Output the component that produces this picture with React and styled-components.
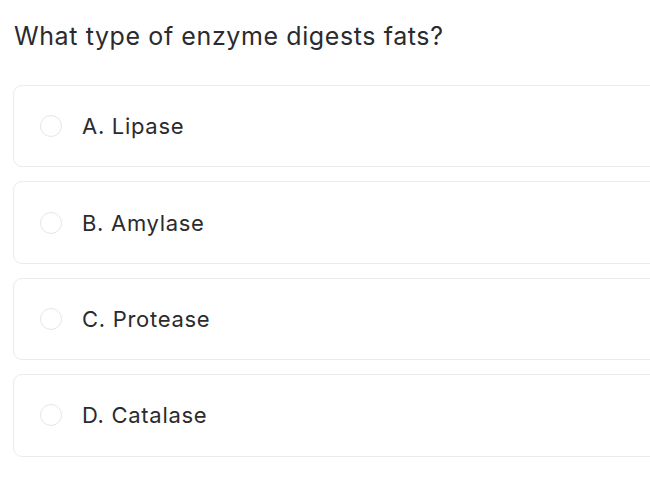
import React from "react";
import styled, { createGlobalStyle } from "styled-components";

const options = ["A. Lipase", "B. Amylase", "C. Protease", "D. Catalase"];

export default function App() {
  return (
    <>
      <GlobalStyle />
      <Page>
        <Question>What type of enzyme digests fats?</Question>
        <OptionList>
          {options.map((label) => (
            <Option key={label}>
              <Radio />
              <Label>{label}</Label>
            </Option>
          ))}
        </OptionList>
      </Page>
    </>
  );
}

const GlobalStyle = createGlobalStyle`
  html, body {
    margin: 0;
    background: #ffffff;
    overflow: hidden;
  }
  body {
    font-family: Inter, Lato, sans-serif;
    color: #2b2b2e;
  }
`;

const Page = styled.div`
  padding: 0 0 0 13px;
  width: 680px;
`;

const Question = styled.h1`
  margin: 0;
  padding-top: 21px;
  height: 85px;
  box-sizing: border-box;
  font-size: 25px;
  font-weight: 400;
  letter-spacing: 0.6px;
  line-height: 30px;
  padding-left: 1px;
`;

const OptionList = styled.div`
  display: flex;
  flex-direction: column;
  gap: 14px;
`;

const Option = styled.label`
  display: flex;
  align-items: center;
  gap: 20px;
  height: 82.4px;
  box-sizing: border-box;
  padding-left: 26px;
  border: 1px solid #ebebeb;
  border-radius: 9px;
  cursor: pointer;
`;

const Radio = styled.span`
  width: 22px;
  height: 22px;
  box-sizing: border-box;
  border: 1px solid #e6e6e6;
  border-radius: 50%;
  flex-shrink: 0;
`;

const Label = styled.span`
  font-size: 22px;
  letter-spacing: 0.7px;
  color: #2b2b2e;
`;
